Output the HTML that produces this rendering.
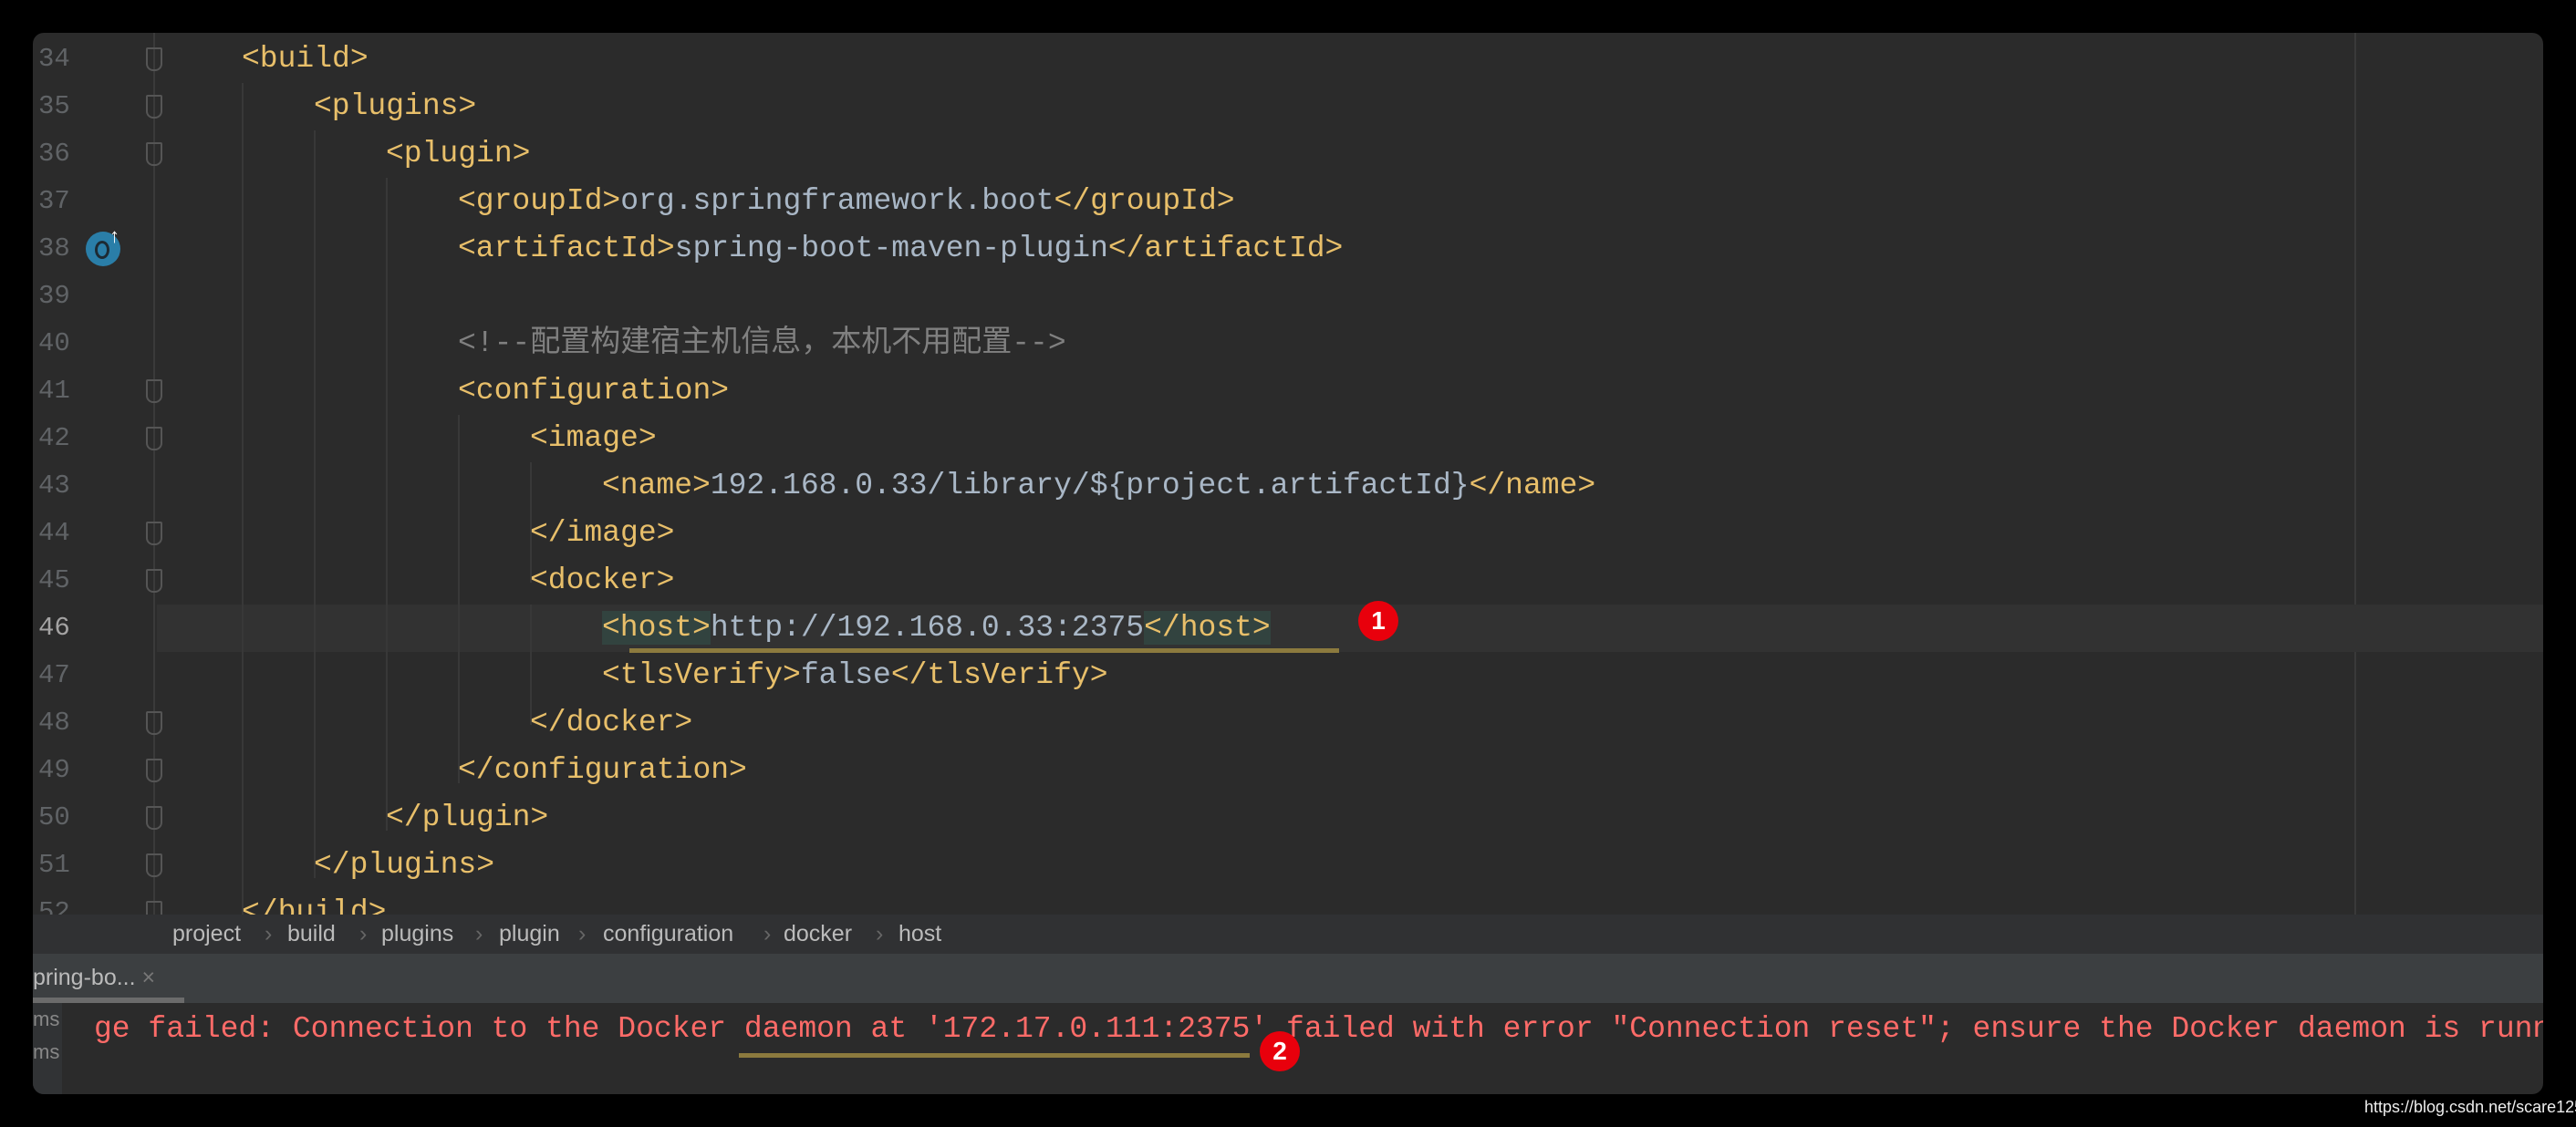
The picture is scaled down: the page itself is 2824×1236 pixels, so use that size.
<!DOCTYPE html>
<html><head><meta charset="utf-8"><style>
body{margin:0;width:2824px;height:1236px;background:#000;overflow:hidden;position:relative;font-family:"Liberation Mono","Noto Sans CJK SC",monospace}
.win{position:absolute;left:36px;top:36px;width:2752px;height:1164px;background:#2b2b2b;border-radius:12px;overflow:hidden}
.ed{position:absolute;left:0;top:0;width:2752px;height:967px;overflow:hidden}
.ln{position:absolute;left:6px;width:42px;text-align:left;font-size:29px;color:#606366;height:52px;line-height:52px}
.code{position:absolute;font-size:33px;height:52px;line-height:52px;white-space:pre;color:#a9b7c6}
.t{color:#e8bf6a}.c{color:#808080}
.hl{background:#32433f}
.g{position:absolute;width:2px;background:#383838}
.fold{position:absolute;left:124px;width:18px;height:26px;border:2px solid #555;border-radius:2px 2px 8px 8px;box-sizing:border-box}
.bc{position:absolute;top:0}
.sp{position:absolute;top:0;color:#666}
</style></head><body>
<div class="win">
<div class="ed">
<div style="position:absolute;left:132px;top:0;width:2px;height:967px;background:#3a3a3a"></div>
<div style="position:absolute;left:2545px;top:0;width:2px;height:967px;background:#3a3a3a"></div>
<div style="position:absolute;left:136px;top:627px;width:2616px;height:52px;background:#323232"></div>
<div class="g" style="left:229px;top:55px;height:912px"></div>
<div class="g" style="left:308px;top:107px;height:820px"></div>
<div class="g" style="left:387px;top:159px;height:716px"></div>
<div class="g" style="left:466px;top:419px;height:404px"></div>
<div class="g" style="left:545px;top:471px;height:132px"></div>
<div class="g" style="left:545px;top:627px;height:132px"></div>
<div class="fold" style="top:16px"></div><div class="fold" style="top:68px"></div><div class="fold" style="top:120px"></div>
<div class="fold" style="top:380px"></div><div class="fold" style="top:432px"></div><div class="fold" style="top:536px"></div>
<div class="fold" style="top:588px"></div><div class="fold" style="top:744px"></div><div class="fold" style="top:796px"></div>
<div class="fold" style="top:848px"></div><div class="fold" style="top:900px"></div><div class="fold" style="top:952px"></div>
<div style="position:absolute;left:58px;top:218px;width:38px;height:38px;border-radius:50%;background:#2a7ea8"></div>
<div style="position:absolute;left:68px;top:228px;width:10px;height:14px;border:3px solid #1d2a33;border-radius:50%"></div>
<div style="position:absolute;left:84px;top:210px;color:#fff;font-size:22px;font-family:'Liberation Sans'">↑</div>

<div class="ln" style="top:3px">34</div><div class="ln" style="top:55px">35</div><div class="ln" style="top:107px">36</div><div class="ln" style="top:159px">37</div><div class="ln" style="top:211px">38</div><div class="ln" style="top:263px">39</div><div class="ln" style="top:315px">40</div><div class="ln" style="top:367px">41</div><div class="ln" style="top:419px">42</div><div class="ln" style="top:471px">43</div><div class="ln" style="top:523px">44</div><div class="ln" style="top:575px">45</div><div class="ln" style="top:627px;color:#a4a3a3">46</div><div class="ln" style="top:679px">47</div><div class="ln" style="top:731px">48</div><div class="ln" style="top:783px">49</div><div class="ln" style="top:835px">50</div><div class="ln" style="top:887px">51</div><div class="ln" style="top:939px">52</div>

<div class="code t" style="left:229px;top:3px">&lt;build&gt;</div>
<div class="code t" style="left:308px;top:55px">&lt;plugins&gt;</div>
<div class="code t" style="left:387px;top:107px">&lt;plugin&gt;</div>
<div class="code" style="left:466px;top:159px"><span class="t">&lt;groupId&gt;</span>org.springframework.boot<span class="t">&lt;/groupId&gt;</span></div>
<div class="code" style="left:466px;top:211px"><span class="t">&lt;artifactId&gt;</span>spring-boot-maven-plugin<span class="t">&lt;/artifactId&gt;</span></div>
<div class="code c" style="left:466px;top:315px">&lt;!--配置构建宿主机信息，本机不用配置--&gt;</div>
<div class="code t" style="left:466px;top:367px">&lt;configuration&gt;</div>
<div class="code t" style="left:545px;top:419px">&lt;image&gt;</div>
<div class="code" style="left:624px;top:471px"><span class="t">&lt;name&gt;</span>192.168.0.33/library/${project.artifactId}<span class="t">&lt;/name&gt;</span></div>
<div class="code t" style="left:545px;top:523px">&lt;/image&gt;</div>
<div class="code t" style="left:545px;top:575px">&lt;docker&gt;</div>
<div class="code" style="left:624px;top:627px"><span class="t hl">&lt;host&gt;</span>http://192.168.0.33:2375<span class="t hl">&lt;/host&gt;</span></div>
<div class="code" style="left:624px;top:679px"><span class="t">&lt;tlsVerify&gt;</span>false<span class="t">&lt;/tlsVerify&gt;</span></div>
<div class="code t" style="left:545px;top:731px">&lt;/docker&gt;</div>
<div class="code t" style="left:466px;top:783px">&lt;/configuration&gt;</div>
<div class="code t" style="left:387px;top:835px">&lt;/plugin&gt;</div>
<div class="code t" style="left:308px;top:887px">&lt;/plugins&gt;</div>
<div class="code t" style="left:229px;top:939px">&lt;/build&gt;</div>
</div>
<div style="position:absolute;left:0;top:967px;width:2752px;height:43px;background:#303133;font-family:'Liberation Sans',sans-serif;font-size:25px;color:#bbb;line-height:43px;white-space:pre">
<span class="bc" style="left:153px">project</span><span class="sp" style="left:254px">›</span>
<span class="bc" style="left:279px">build</span><span class="sp" style="left:358px">›</span>
<span class="bc" style="left:382px">plugins</span><span class="sp" style="left:485px">›</span>
<span class="bc" style="left:511px">plugin</span><span class="sp" style="left:598px">›</span>
<span class="bc" style="left:625px">configuration</span><span class="sp" style="left:801px">›</span>
<span class="bc" style="left:823px">docker</span><span class="sp" style="left:924px">›</span>
<span class="bc" style="left:949px">host</span></div>
<div style="position:absolute;left:0;top:1010px;width:2752px;height:54px;background:#3c3f41;font-family:'Liberation Sans',sans-serif;font-size:25px;color:#bbb;line-height:52px"><span style="position:absolute;left:0">pring-bo...  <span style="color:#777">×</span></span>
<div style="position:absolute;left:0;top:48px;width:166px;height:6px;background:#6b6b6b"></div></div>
<div style="position:absolute;left:0;top:1064px;width:32px;height:100px;background:#313335;font-family:'Liberation Sans',sans-serif;font-size:22px;color:#888;line-height:36px">ms<br>ms</div>
<div class="code" style="left:67px;top:1067px;color:#ff6b68">ge failed: Connection to the Docker daemon at '172.17.0.111:2375' failed with error "Connection reset"; ensure the Docker daemon is running</div>
</div>
<div style="position:absolute;left:690px;top:711px;width:778px;height:5px;background:#8c7a3e"></div>
<div style="position:absolute;left:1489px;top:659px;width:44px;height:44px;border-radius:50%;background:#e8000c;color:#fff;font:bold 28px/44px 'Liberation Sans',sans-serif;text-align:center">1</div>
<div style="position:absolute;left:810px;top:1155px;width:560px;height:5px;background:#8c7a3e"></div>
<div style="position:absolute;left:1381px;top:1131px;width:44px;height:44px;border-radius:50%;background:#e8000c;color:#fff;font:bold 28px/44px 'Liberation Sans',sans-serif;text-align:center">2</div>
<div style="position:absolute;left:2592px;top:1204px;color:#eee;font:18px 'Liberation Sans',sans-serif">https://blog.csdn.net/scare125</div>
</body></html>
